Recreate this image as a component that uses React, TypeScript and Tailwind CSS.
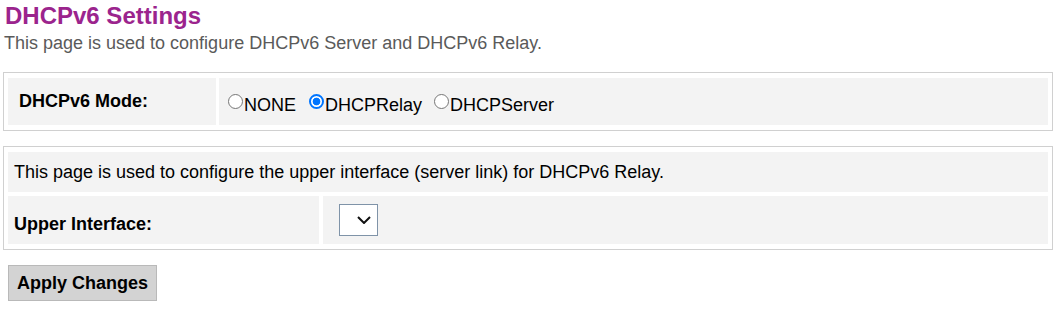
export default function App() {
  const radio =
    'm-0 mb-[8px] mr-[1px] box-border h-[15px] w-[15px] min-w-[15px] shrink-0 appearance-none rounded-full border border-[#767676] bg-white checked:border-2 checked:border-[#0075ff] checked:bg-[radial-gradient(circle,#0075ff_0_3.5px,#fff_4.2px)]';

  return (
    <div className="min-h-screen bg-white px-[3px] pt-[2px] font-['Liberation_Sans',Arial,sans-serif] text-[18px] text-black">
      {/* Header */}
      <h1 className="text-[24px] font-bold leading-[28px] text-[#9b248d] pl-[2px]">DHCPv6 Settings</h1>
      <p className="mt-[3px] leading-[20px] text-[#5a5a5a] pl-[1px]">
        This page is used to configure DHCPv6 Server and DHCPv6 Relay.
      </p>

      {/* Mode table */}
      <div className="mt-[19px] w-[1050px] border border-[#d0d0d0] px-[4px] py-[5px]">
        <div className="flex gap-[3px]">
          <div className="flex h-[47px] w-[208px] items-center bg-[#f3f3f3] pl-[11px] font-bold">DHCPv6 Mode:</div>
          <div className="flex h-[47px] flex-1 items-center bg-[#f3f3f3] pl-[9px] pt-[8px]">
            <label className="flex items-center">
              <input type="radio" name="mode" className={radio} />
              NONE
            </label>
            <label className="ml-[13px] flex items-center">
              <input type="radio" name="mode" defaultChecked className={radio} />
              DHCPRelay
            </label>
            <label className="ml-[12px] flex items-center">
              <input type="radio" name="mode" className={radio} />
              DHCPServer
            </label>
          </div>
        </div>
      </div>

      {/* Relay table */}
      <div className="mt-[15px] w-[1050px] border border-[#d0d0d0] px-[4px] py-[5px]">
        <div className="flex h-[40px] items-center bg-[#f3f3f3] pl-[6px]">
          This page is used to configure the upper interface (server link) for DHCPv6 Relay.
        </div>
        <div className="mt-[4px] flex gap-[4px]">
          <div className="flex h-[48px] w-[311px] items-center bg-[#f3f3f3] pl-[6px] pt-[8px] font-bold">Upper Interface:</div>
          <div className="flex h-[48px] flex-1 items-center bg-[#f3f3f3] pl-[16px]">
            <div className="flex h-[32px] w-[39px] items-center justify-end border border-[#7f93a8] bg-white pr-[6px]">
              <svg width="14" height="8" viewBox="0 0 14 8" fill="none" stroke="#111" strokeWidth="2">
                <polyline points="1,1 7,7 13,1" />
              </svg>
            </div>
          </div>
        </div>
      </div>

      {/* Apply */}
      <button className="mt-[15px] ml-[5px] h-[36px] w-[149px] border border-[#b9b9b9] bg-[#d3d3d3] text-[18px] font-bold text-black">
        Apply Changes
      </button>
    </div>
  );
}
